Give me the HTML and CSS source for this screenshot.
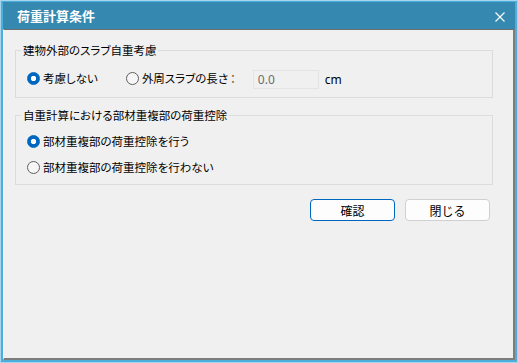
FILE: index.html
```html
<!DOCTYPE html>
<html lang="ja">
<head>
    <meta charset="UTF-8">
    <meta name="viewport" content="width=device-width, initial-scale=1.0">
    <title>荷重計算条件</title>
    <link rel="stylesheet" href="styles.css">
</head>
<body>

<div class="dialog">
    <div class="titlebar">
        <span class="title">荷重計算条件</span>
        <button class="close" aria-label="閉じる">
            <svg width="10" height="10" viewBox="0 0 10 10">
                <path d="M0.5 0.5 L9.5 9.5 M9.5 0.5 L0.5 9.5" stroke="#fff" stroke-width="1.1" fill="none"/>
            </svg>
        </button>
    </div>

    <div class="client">
        <fieldset class="group group-slab">
            <legend>建物外部のスラブ自重考慮</legend>
            <div class="row">
                <label class="opt"><input type="radio" name="slab" checked><span>考慮しない</span></label>
                <label class="opt opt-len"><input type="radio" name="slab"><span>外周スラブの長さ<span class="colon">：</span></span></label>
                <input class="num" type="text" value="0.0" disabled>
                <span class="unit">cm</span>
            </div>
        </fieldset>

        <fieldset class="group group-deduct">
            <legend>自重計算における部材重複部の荷重控除</legend>
            <label class="opt"><input type="radio" name="deduct" checked><span>部材重複部の荷重控除を行う</span></label>
            <label class="opt"><input type="radio" name="deduct"><span>部材重複部の荷重控除を行わない</span></label>
        </fieldset>

        <div class="actions">
            <button class="btn btn-default">確認</button>
            <button class="btn">閉じる</button>
        </div>
    </div>
</div>

</body>
</html>
```

FILE: styles.css
```css
html, body {
    margin: 0;
    padding: 0;
}
body {
    width: 518px;
    height: 363px;
    font-family: "Noto Sans CJK JP", sans-serif;
    font-size: 11.5px;
    font-feature-settings: "palt";
    color: #000;
    overflow: hidden;
}
.dialog {
    box-sizing: border-box;
    height: 363px;
    border: 1px solid #a6d5ec;
    background: #4eaedb;
    padding: 1px 2px 2px 2px;
    display: flex;
    flex-direction: column;
}
.titlebar {
    height: 27px;
    flex: none;
    background: #3589b1;
    display: flex;
    align-items: center;
    justify-content: space-between;
    padding: 0 10px 0 14px;
}
.title {
    color: #fff;
    font-size: 13px;
    font-weight: bold;
    line-height: 16px;
    padding-top: 1px;
}
.close {
    border: none;
    background: none;
    padding: 0;
    width: 10px;
    height: 10px;
    display: flex;
    margin-top: 2px;
}
.client {
    flex: 1;
    background: #f0f0f0;
    border-top: 1px solid #6e6e6e;
    border-left: 1px solid #fff;
    border-right: 2px solid #7d7d7d;
    border-bottom: 2px solid #7d7d7d;
}
.group {
    margin: 13px 20px 0 11px;
    padding: 10px 0 9px 11px;
    border: 1px solid #dcdcdc;
    min-width: 0;
}
.group legend {
    line-height: 15px;
    padding: 0 2px;
    margin-left: -6px;
}
.group-deduct {
    margin-top: 10px;
    padding-top: 8px;
    padding-bottom: 7px;
    display: flex;
    flex-direction: column;
    gap: 6px;
}
.row {
    display: flex;
    align-items: center;
    height: 20px;
}
.opt {
    display: flex;
    align-items: center;
    height: 20px;
    line-height: 20px;
}
.opt input {
    appearance: none;
    box-sizing: border-box;
    width: 13px;
    height: 13px;
    margin: 0 3px 0 0;
    border: 1px solid #5f5f5f;
    border-radius: 50%;
    background: #f6f6f6;
}
.opt input:checked {
    border-color: #0067c0;
    background: radial-gradient(circle, #fff 0 2.4px, #0067c0 3px);
}
.opt-len {
    margin-left: 28px;
}
.colon {
    color: #7a5520;
    margin-left: 2px;
}
.num {
    box-sizing: border-box;
    width: 66px;
    height: 19px;
    margin: 2px 0 0 17px;
    padding: 0 0 0 4px;
    border: 1px solid #e4e4e4;
    background: #f0f0f0;
    color: #6d6d6d;
    font-family: "Noto Sans", sans-serif;
    font-size: 12px;
}
.unit {
    margin: 2px 0 0 6px;
    font-family: "Noto Sans", sans-serif;
    font-size: 12px;
}
.actions {
    display: flex;
    justify-content: flex-end;
    gap: 10px;
    margin: 14px 23px 0 0;
}
.btn {
    box-sizing: border-box;
    width: 85px;
    height: 22px;
    padding: 0;
    background: #fdfdfd;
    border: 1px solid #d0d0d0;
    border-radius: 4px;
    font-family: "Noto Sans CJK JP", sans-serif;
    font-size: 12px;
    color: #000;
}
.btn-default {
    border-color: #0067c0;
}
```
